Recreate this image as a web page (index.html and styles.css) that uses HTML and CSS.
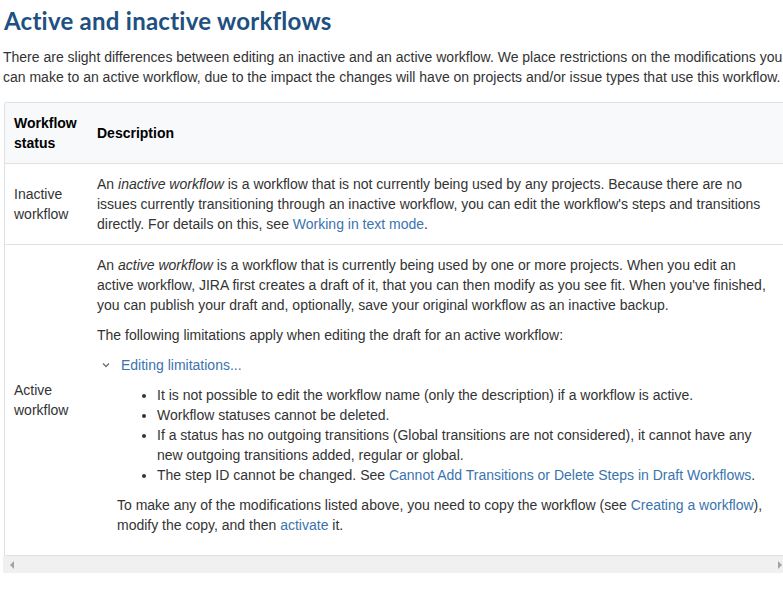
FILE: index.html
```html
<!DOCTYPE html>
<html lang="en">
<head>
<meta charset="utf-8">
<title>Active and inactive workflows</title>
<link rel="stylesheet" href="styles.css">
</head>
<body>
<div class="page">
  <h1 class="title">Active and inactive workflows</h1>
  <p class="intro">There are slight differences between editing an inactive and an active workflow. We place restrictions on the modifications you can make to an active workflow, due to the impact the changes will have on projects and/or issue types that use this workflow.</p>

  <div class="table-wrap">
    <div class="table-scroll">
      <table class="wf-table">
        <thead>
          <tr>
            <th class="col-status">Workflow status</th>
            <th class="col-desc">Description</th>
          </tr>
        </thead>
        <tbody>
          <tr>
            <td class="col-status">Inactive workflow</td>
            <td class="col-desc">
              <p>An <em>inactive workflow</em> is a workflow that is not currently being used by any projects. Because there are no issues currently transitioning through an inactive workflow, you can edit the workflow's steps and transitions directly. For details on this, see <a href="#">Working in text mode</a>.</p>
            </td>
          </tr>
          <tr>
            <td class="col-status">Active workflow</td>
            <td class="col-desc">
              <p>An <em>active workflow</em> is a workflow that is currently being used by one or more projects. When you edit an active workflow, JIRA first creates a draft of it, that you can then modify as you see fit. When you've finished, you can publish your draft and, optionally, save your original workflow as an inactive backup.</p>
              <p class="gap">The following limitations apply when editing the draft for an active workflow:</p>
              <div class="expand">
                <div class="expand-head">
                  <svg class="chev" width="8" height="6" viewBox="0 0 8 6"><path d="M1 1.5 L4 4.5 L7 1.5" fill="none" stroke="#707070" stroke-width="1.3"/></svg>
                  <a href="#" class="expand-link">Editing limitations...</a>
                </div>
                <div class="expand-body">
                  <ul class="limits">
                    <li>It is not possible to edit the workflow name (only the description) if a workflow is active.</li>
                    <li>Workflow statuses cannot be deleted.</li>
                    <li>If a status has no outgoing transitions (Global transitions are not considered), it cannot have any new outgoing transitions added, regular or global.</li>
                    <li>The step ID cannot be changed. See <a href="#">Cannot Add Transitions or Delete Steps in Draft Workflows</a>.</li>
                  </ul>
                  <p class="gap">To make any of the modifications listed above, you need to copy the workflow (see <a href="#">Creating a workflow</a>), modify the copy, and then <a href="#">activate</a> it.</p>
                </div>
              </div>
            </td>
          </tr>
        </tbody>
      </table>
    </div>
    <div class="hscroll">
      <span class="arrow arrow-left"></span>
      <span class="arrow arrow-right"></span>
    </div>
  </div>
</div>
</body>
</html>
```

FILE: styles.css
```css
html, body {
  margin: 0;
  padding: 0;
  background: #ffffff;
  overflow: hidden;
}

body {
  font-family: "Liberation Sans", Arial, sans-serif;
  font-size: 14px;
  line-height: 20px;
  color: #333333;
}

.page {
  padding: 6px 0 0 3px;
  width: 820px;
}

.title {
  font-family: Lato, "Open Sans", sans-serif;
  font-weight: 700;
  font-size: 24px;
  line-height: 30px;
  letter-spacing: 0.25px;
  color: #205081;
  margin: 0 0 11px 1px;
}

.intro {
  margin: 0;
  width: 780px;
}

a {
  color: #3b73af;
  text-decoration: none;
}

.table-wrap {
  margin-top: 15px;
  margin-left: 1px;
  width: 800px;
}

.table-scroll {
  border: 1px solid #dfe1e6;
  border-right: none;
  border-top-left-radius: 3px;
  overflow: hidden;
}

.wf-table {
  border-collapse: collapse;
  width: 100%;
}

.wf-table th,
.wf-table td {
  text-align: left;
  vertical-align: middle;
  padding: 10px 10px;
}

.wf-table thead th {
  background: #f8f9fb;
  font-weight: 700;
  color: #000000;
}

.wf-table tbody tr {
  border-top: 1px solid #dfe1e6;
}

.wf-table .col-status {
  width: 63px;
  padding-left: 9px;
}

.wf-table td.col-desc {
  vertical-align: top;
  padding-right: 34px;
}

.wf-table p {
  margin: 0;
}

.wf-table p.gap {
  margin-top: 10px;
}

.expand {
  margin-top: 10px;
}

.expand-head {
  display: flex;
  align-items: center;
  padding-left: 5px;
}

.chev {
  margin-right: 11px;
}

.expand-body {
  padding-left: 20px;
  padding-bottom: 10px;
}

.limits {
  margin: 10px 0 0 0;
  padding-left: 40px;
}

.hscroll {
  position: relative;
  height: 17px;
  background: #f0f0f0;
  margin-left: -1px;
}

.arrow {
  position: absolute;
  top: 5px;
  width: 0;
  height: 0;
  border-top: 4px solid transparent;
  border-bottom: 4px solid transparent;
}

.arrow-left {
  left: 7px;
  border-right: 4px solid #a3a3a3;
}

.arrow-right {
  left: 775px;
  border-left: 4px solid #a3a3a3;
}
```
